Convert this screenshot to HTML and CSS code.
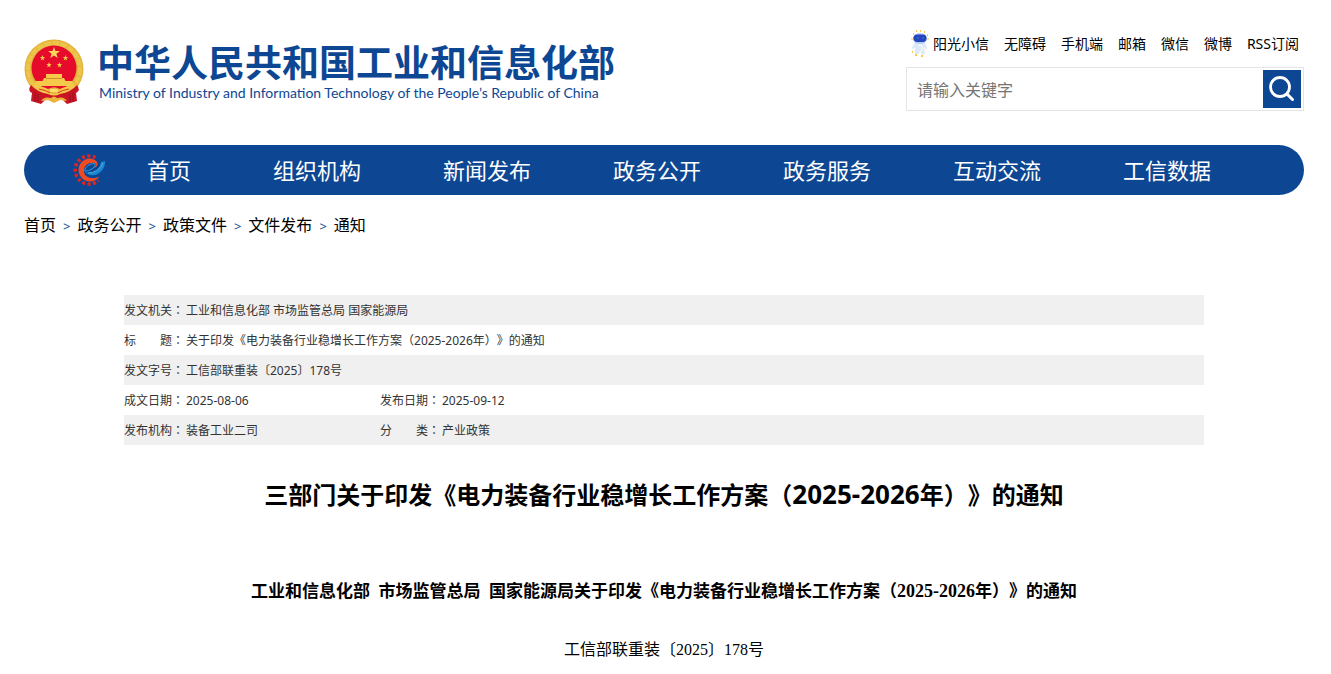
FILE: index.html
```html
<!DOCTYPE html>
<html lang="zh-CN">
<head>
<meta charset="utf-8">
<meta name="viewport" content="width=device-width, initial-scale=1">
<title>中华人民共和国工业和信息化部</title>
<link rel="stylesheet" href="styles.css">
</head>
<body>
<div class="page">
  <header class="header">
    <a class="brand" href="#">
      <svg class="emblem" viewBox="0 0 60 66" aria-hidden="true">
        <circle cx="30" cy="30" r="29.500" fill="#e3b43c"/>
        <circle cx="30" cy="30" r="26" fill="none" stroke="#edc54c" stroke-width="4" stroke-dasharray="7 1"/>
        <path d="M7 46Q3 52 8 54L7 62L17 65L22 60L38 60L43 65L53 62L52 54Q57 51 53 46L43 49L30 52L17 49Z" fill="#c91424"/>
        <circle cx="30" cy="29" r="22.500" fill="#e60a2b"/>
        <path fill="#fbd75c" d="M30 8l1.500 4.100h4.400l-3.500 2.700 1.300 4.300-3.700-2.600-3.700 2.600 1.300-4.300-3.500-2.700h4.400z"/>
        <g fill="#f5c94a">
          <path id="star" d="M18.500 16l.7 2h2.100l-1.700 1.300.6 2.100-1.700-1.200-1.700 1.200.6-2.100-1.700-1.300h2.100z"/>
          <use href="#star" x="23"/><use href="#star" x="6.500" y="7"/><use href="#star" x="17" y="7"/>
          <path d="M22 35h16v4H22zM20 39h20l2 4H18zM12 42h36l2 5H10z"/>
        </g>
        <path d="M22 39.500h16" stroke="#d18d2a" fill="none"/>
        <path d="M7 46Q19 47 24 50Q30 47 36 50Q41 47 53 46Q47 53 36 55Q30 58 24 55Q13 53 7 46Z" fill="#f5ca4b"/>
        <path d="M15 50Q22 51 26 54M45 50Q38 51 34 54" stroke="#d93a26" fill="none"/>
        <ellipse cx="30" cy="51.500" rx="5" ry="2.500" fill="#ffdf69" stroke="#d99a2e"/>
        <path d="M17 62Q20 57 27 59Q30 56 33 59Q40 57 43 62L36 61L30 64L24 61Z" fill="#edb43d"/>
        <path d="M11 53V63M14 55V63M46 55V63M49 53V63" stroke="#8f1227" fill="none"/>
      </svg>
      <span class="brand-text">
        <strong class="brand-name">中华人民共和国工业和信息化部</strong>
        <span class="brand-sub" lang="en">Ministry of Industry and Information Technology of the People’s Republic of China</span>
      </span>
    </a>
    <div class="tools">
      <nav class="top-links" aria-label="快捷链接">
        <a class="mascot-link" href="#"><svg class="mascot" viewBox="0 0 18 28" aria-hidden="true">
          <path d="M2 4h1M5 1h1M9 0.800h1M13 2h1M16 5h1M0.500 9h1M16.500 9h1M1 22h1M4 25h2M10 26h2" stroke="#ffcb45" stroke-width="2"/>
          <path d="M5 12Q1 15 1 19L4 18L4 24L8 24L9 20L11 25L14 24L13 17L16 20Q16 15 13 12Z" fill="#dce9f8"/>
          <ellipse cx="9" cy="8.500" rx="7" ry="5.500" fill="#b3ccf1"/>
          <rect x="2.500" y="4.500" width="13" height="7.500" rx="3.700" fill="#2546bd"/>
          <path d="M6 8h2M11 8h2" stroke="#4776dd"/>
          <path d="M7 15h4v6" fill="none" stroke="#fff"/>
        </svg>阳光小信</a>
        <a href="#">无障碍</a><a href="#">手机端</a><a href="#">邮箱</a><a href="#">微信</a><a href="#">微博</a><a href="#">RSS订阅</a>
      </nav>
      <form class="search" role="search">
        <input class="search-input" type="text" placeholder="请输入关键字" aria-label="请输入关键字">
        <button class="search-button" type="submit" aria-label="搜索">
          <svg viewBox="0 0 38 38" aria-hidden="true"><circle cx="17" cy="17" r="9.500" fill="none" stroke="#fff" stroke-width="2.800"/><path d="M24 24L29.500 29.500" stroke="#fff" stroke-width="3" stroke-linecap="round"/></svg>
        </button>
      </form>
    </div>
  </header>

  <nav class="main-nav" aria-label="主导航">
    <svg class="nav-logo" viewBox="0 0 34 34" aria-hidden="true">
      <path d="M23.500 4.500A14 14 0 1 0 26.500 27.500" fill="none" stroke="#dc2423" stroke-width="3.600" stroke-dasharray="3 2.400"/>
      <path d="M18 5.500A11.500 11.500 0 1 0 27.500 23.500C21 27 13 25 12 19C11 13 17 9 22 10C25 11 24 13 22 15C28 13 26 6 18 5.500Z" fill="#f04a23"/>
      <path d="M12 18C17 23 28 19 29 9L33 8C34 19 20 28 12 18Z" fill="#1b86d1"/>
      <path d="M12 18Q15 11 22 10.500Q25 12 20 16Q16 18.500 13 18" fill="none" stroke="#2b9be0"/>
      <path d="M16 20Q26 20 31 10" fill="none" stroke="#56b2e8"/>
    </svg>
    <a href="#">首页</a><a href="#">组织机构</a><a href="#">新闻发布</a><a href="#">政务公开</a><a href="#">政务服务</a><a href="#">互动交流</a><a href="#">工信数据</a>
  </nav>

  <nav class="crumbs" aria-label="当前位置">
    <a href="#">首页</a><span>&gt;</span><a href="#">政务公开</a><span>&gt;</span><a href="#">政策文件</a><span>&gt;</span><a href="#">文件发布</a><span>&gt;</span><a href="#">通知</a>
  </nav>

  <main class="article">
    <table class="meta">
      <colgroup><col class="col-label"><col class="col-value"><col class="col-label"><col></colgroup>
      <tbody>
        <tr><th scope="row">发文机关<span class="mid">：</span></th><td colspan="3">工业和信息化部 市场监管总局 国家能源局</td></tr>
        <tr><th scope="row">标　　题<span class="mid">：</span></th><td colspan="3">关于印发《电力装备行业稳增长工作方案<span class="mid">（</span>2025-2026年<span class="mid">）</span>》的通知</td></tr>
        <tr><th scope="row">发文字号<span class="mid">：</span></th><td colspan="3">工信部联重装〔2025〕178号</td></tr>
        <tr><th scope="row">成文日期<span class="mid">：</span></th><td>2025-08-06</td><th scope="row">发布日期<span class="mid">：</span></th><td>2025-09-12</td></tr>
        <tr><th scope="row">发布机构<span class="mid">：</span></th><td>装备工业二司</td><th scope="row">分　　类<span class="mid">：</span></th><td>产业政策</td></tr>
      </tbody>
    </table>
    <h1 class="title">三部门关于印发《电力装备行业稳增长工作方案<span class="mid">（</span><span class="title-years">2025-2026</span>年<span class="mid">）</span>》的通知</h1>
    <p class="lead">工业和信息化部&ensp;市场监管总局&ensp;国家能源局关于印发《电力装备行业稳增长工作方案（<span class="lead-years">2025-2026</span>年）》的通知</p>
    <p class="doc-number">工信部联重装〔2025〕178号</p>
  </main>
</div>
</body>
</html>
```
FILE: styles.css
```css
* { box-sizing: border-box; }

body {
  margin: 0;
  background: #fff;
  color: #000;
  font-family: "Noto Sans", "Noto Sans CJK SC", sans-serif;
  font-size: 16px;
  text-spacing-trim: space-all;
}

a { color: inherit; text-decoration: none; }
svg { display: block; flex: none; }

/* Full-width punctuation centred in its box */
.mid {
  font-family: "Noto Sans CJK TC", sans-serif;
  -webkit-locale: "zh-TW";
  line-height: 1;
}

.page { padding: 0 27px 0 24px; }

.header {
  display: flex;
  justify-content: space-between;
  align-items: flex-start;
  height: 145px;
  padding-top: 30px;
}

.brand {
  display: flex;
  gap: 13px;
  padding-top: 9px;
  color: #0d4793;
  white-space: nowrap;
}

.emblem { width: 60px; height: 66px; }

.brand-text { display: flex; flex-direction: column; padding-top: 6px; }

.brand-name {
  font: 700 37px/40px "Liberation Sans", "Noto Sans CJK SC", sans-serif;
}

.brand-sub {
  padding-left: 2px;
  font-family: Lato, "Noto Sans", sans-serif;
  font-size: 14px;
  line-height: 16px;
}

.tools { flex: 0 0 398px; }

.top-links {
  display: flex;
  justify-content: flex-end;
  gap: 15px;
  height: 28px;
  padding-right: 5px;
  font-size: 14px;
  line-height: 28px;
  white-space: nowrap;
}

.mascot-link { display: flex; gap: 4px; }
.mascot { width: 18px; height: 28px; }

.search {
  display: flex;
  align-items: center;
  height: 44px;
  margin: 9px 0 0;
  padding-right: 2px;
  border: 1px solid #e4e4e4;
}

.search-input {
  flex: 1;
  min-width: 0;
  height: 40px;
  padding: 2px 10px 0;
  border: 0;
  outline: 0;
  background: none;
  font: inherit;
}

.search-input::placeholder { color: #757575; }

.search-button {
  width: 38px;
  height: 38px;
  padding: 0;
  border: 0;
  background: #0d4793;
}

.main-nav {
  display: flex;
  align-items: center;
  height: 50px;
  padding-left: 48px;
  border-radius: 25px;
  background: #0d4793;
  color: #fff;
  font-size: 22px;
  line-height: 50px;
  white-space: nowrap;
}

.main-nav a { padding: 0 41px; }
.nav-logo { width: 34px; height: 34px; }

.crumbs {
  display: flex;
  gap: 7px;
  padding-top: 18px;
  line-height: 24px;
}

.crumbs span { color: #0d4793; font-size: 13px; line-height: 26px; }

.article { padding: 56px 100px 0; }

.meta {
  width: 100%;
  border-collapse: collapse;
  table-layout: fixed;
  color: #333;
  font-size: 12px;
  line-height: 18px;
}

.col-label { width: 62px; }
.col-value { width: 194px; }

.meta th,
.meta td {
  height: 30px;
  padding: 2px 0 0;
  font-weight: 400;
  text-align: left;
  white-space: nowrap;
}

.meta tr:nth-child(odd) { background: #f0f0f0; }

.title {
  margin: 32px 0 0;
  font-size: 24px;
  font-weight: 700;
  line-height: 36px;
  text-align: center;
  white-space: nowrap;
}

.title-years { font-size: 26px; line-height: 1; }

.lead,
.doc-number {
  margin: 0;
  font-family: "Liberation Serif", "Noto Sans CJK SC", sans-serif;
  text-align: center;
  white-space: nowrap;
}

.lead { padding-top: 65px; font-size: 17px; font-weight: 700; line-height: 28px; }
.lead-years { font-size: 18px; line-height: 1; }
.doc-number { padding-top: 30px; font-size: 16px; line-height: 28px; }
```
